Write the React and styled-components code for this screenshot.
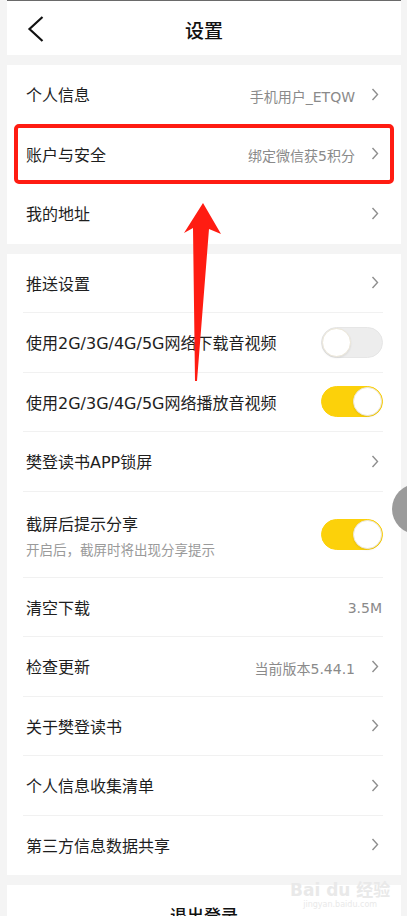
import React from "react";
import styled, { createGlobalStyle } from "styled-components";

const Global = createGlobalStyle`
  html, body { margin: 0; padding: 0; background: #f4f4f4; }
  body { font-family: "DejaVu Sans", "Noto Sans CJK SC", sans-serif; }
  * { box-sizing: border-box; }
`;

const Page = styled.div`
  position: relative;
  width: 407px;
  height: 916px;
  overflow: hidden;
  background: #f4f4f4;
  padding: 0 6px 0 7px;
  display: flex;
  flex-direction: column;
  & > * { flex: none; }
`;

const Header = styled.header`
  height: 55px;
  background: #fff;
  border-top: 1px solid #6a6a6a;
  display: grid;
  grid-template-columns: 60px 1fr 60px;
  align-items: center;
`;

const Back = styled.div`
  display: flex;
  align-items: center;
  padding-left: 20px;
  padding-top: 1px;
`;

const Title = styled.h1`
  margin: 0;
  text-align: center;
  font-family: "Noto Sans CJK SC", sans-serif;
  font-size: 19px;
  font-weight: 500;
  color: #111;
  padding-top: 2px;
`;

const Gap = styled.div`
  height: 10px;
`;

const Group = styled.section`
  background: #fff;
  display: flex;
  flex-direction: column;
`;

const Row = styled.div`
  height: ${(p) => (p.$tall ? 86 : 59.5)}px;
  margin: 0 18px 0 16px;
  padding: 0 4px 0 3px;
  display: flex;
  align-items: center;
  border-bottom: 1px solid ${(p) => (p.$last || p.$plain ? "transparent" : "#f1f1f1")};
  flex: none;
`;

const TextCol = styled.div`
  flex: 1;
  display: flex;
  flex-direction: column;
  gap: 6px;
  padding-top: ${(p) => (p.$tall ? 6 : 4)}px;
`;

const Label = styled.span`
  font-size: 16px;
  color: #1e1e1e;
  line-height: 20px;
  white-space: nowrap;
`;

const Sub = styled.span`
  font-size: 13.5px;
  color: #9a9a9a;
  line-height: 18px;
`;

const Value = styled.span`
  font-size: 14px;
  color: #8a8a8a;
  padding-top: 3px;
  margin-right: ${(p) => (p.$noChevron ? -3 : 16)}px;
  white-space: nowrap;
`;

const Track = styled.div`
  width: 62px;
  height: 31px;
  border-radius: 16px;
  margin-right: -4px;
  background: ${(p) => (p.$on ? "#fcd10a" : "#ededed")};
  border: 1px solid ${(p) => (p.$on ? "#fcd10a" : "#e6e6e6")};
  display: flex;
  align-items: center;
  justify-content: ${(p) => (p.$on ? "flex-end" : "flex-start")};
  flex: none;
`;

const Knob = styled.div`
  width: 29px;
  height: 29px;
  border-radius: 50%;
  background: #fff;
  border: 1px solid #ebe6d8;
  box-shadow: 0 1px 2px rgba(0, 0, 0, 0.08);
`;

const Logout = styled.div`
  background: #fff;
  height: 60px;
  display: flex;
  justify-content: center;
  padding-top: 17px;
  font-family: "Noto Sans CJK SC", sans-serif;
  font-size: 17px;
  font-weight: 500;
  color: #111;
`;

const Highlight = styled.div`
  position: absolute;
  left: 14px;
  top: 124px;
  width: 380px;
  height: 60px;
  border: 4px solid #ff1c12;
  border-radius: 5px;
  pointer-events: none;
`;

const ArrowLayer = styled.svg`
  position: absolute;
  left: 0;
  top: 0;
  pointer-events: none;
`;

const Floater = styled.div`
  position: absolute;
  left: 392px;
  top: 484px;
  width: 50px;
  height: 50px;
  border-radius: 50%;
  background: #9b9b9b;
`;

const Watermark = styled.div`
  position: absolute;
  left: 290px;
  top: 882px;
  display: flex;
  flex-direction: column;
  align-items: center;
  color: #e9e9e9;
  font-family: "DejaVu Sans", "Noto Sans CJK SC", sans-serif;
  line-height: 1;
`;

const WmBig = styled.span`
  font-size: 17px;
  font-weight: bold;
`;

const WmSmall = styled.span`
  font-size: 8px;
  margin-top: 2px;
`;

const Chevron = () => (
  <svg width="8" height="13" viewBox="0 0 8 13">
    <path d="M1.5 1 L6.5 6.5 L1.5 12" fill="none" stroke="#8e8e8e" strokeWidth="1.4" />
  </svg>
);

const Toggle = ({ on }) => (
  <Track $on={on}>
    <Knob />
  </Track>
);

const Item = ({ label, value, chevron = true, toggle, sub, last, tall, plain }) => (
  <Row $tall={tall} $last={last} $plain={plain}>
    <TextCol $tall={tall}>
      <Label>{label}</Label>
      {sub && <Sub>{sub}</Sub>}
    </TextCol>
    {value && <Value $noChevron={!chevron}>{value}</Value>}
    {toggle !== undefined ? <Toggle on={toggle} /> : chevron && <Chevron />}
  </Row>
);

export default function App() {
  return (
    <>
      <Global />
      <Page>
        <Header>
          <Back>
            <svg width="18" height="28" viewBox="0 0 18 28">
              <path d="M15.5 2 L2.5 14 L15.5 26" fill="none" stroke="#111" strokeWidth="2.2" />
            </svg>
          </Back>
          <Title>设置</Title>
          <div />
        </Header>
        <Gap />
        <Group>
          <Item label="个人信息" value="手机用户_ETQW" plain />
          <Item label="账户与安全" value="绑定微信获5积分" plain />
          <Item label="我的地址" last />
        </Group>
        <Gap />
        <Group>
          <Item label="推送设置" />
          <Item label="使用2G/3G/4G/5G网络下载音视频" toggle={false} />
          <Item label="使用2G/3G/4G/5G网络播放音视频" toggle={true} />
          <Item label="樊登读书APP锁屏" />
          <Item label="截屏后提示分享" sub="开启后，截屏时将出现分享提示" toggle={true} tall />
          <Item label="清空下载" value="3.5M" chevron={false} />
          <Item label="检查更新" value="当前版本5.44.1" />
          <Item label="关于樊登读书" />
          <Item label="个人信息收集清单" />
          <Item label="第三方信息数据共享" last />
        </Group>
        <Gap />
        <Logout>退出登录</Logout>

        <Highlight />
        <ArrowLayer width="407" height="916" viewBox="0 0 407 916">
          <polygon
            points="203,203 221,234 209,229 197,381 195,381 193,228 184,233"
            fill="#ff1c12"
          />
        </ArrowLayer>
        <Floater />
        <Watermark>
          <WmBig>Bai du 经验</WmBig>
          <WmSmall>jingyan.baidu.com</WmSmall>
        </Watermark>
      </Page>
    </>
  );
}
